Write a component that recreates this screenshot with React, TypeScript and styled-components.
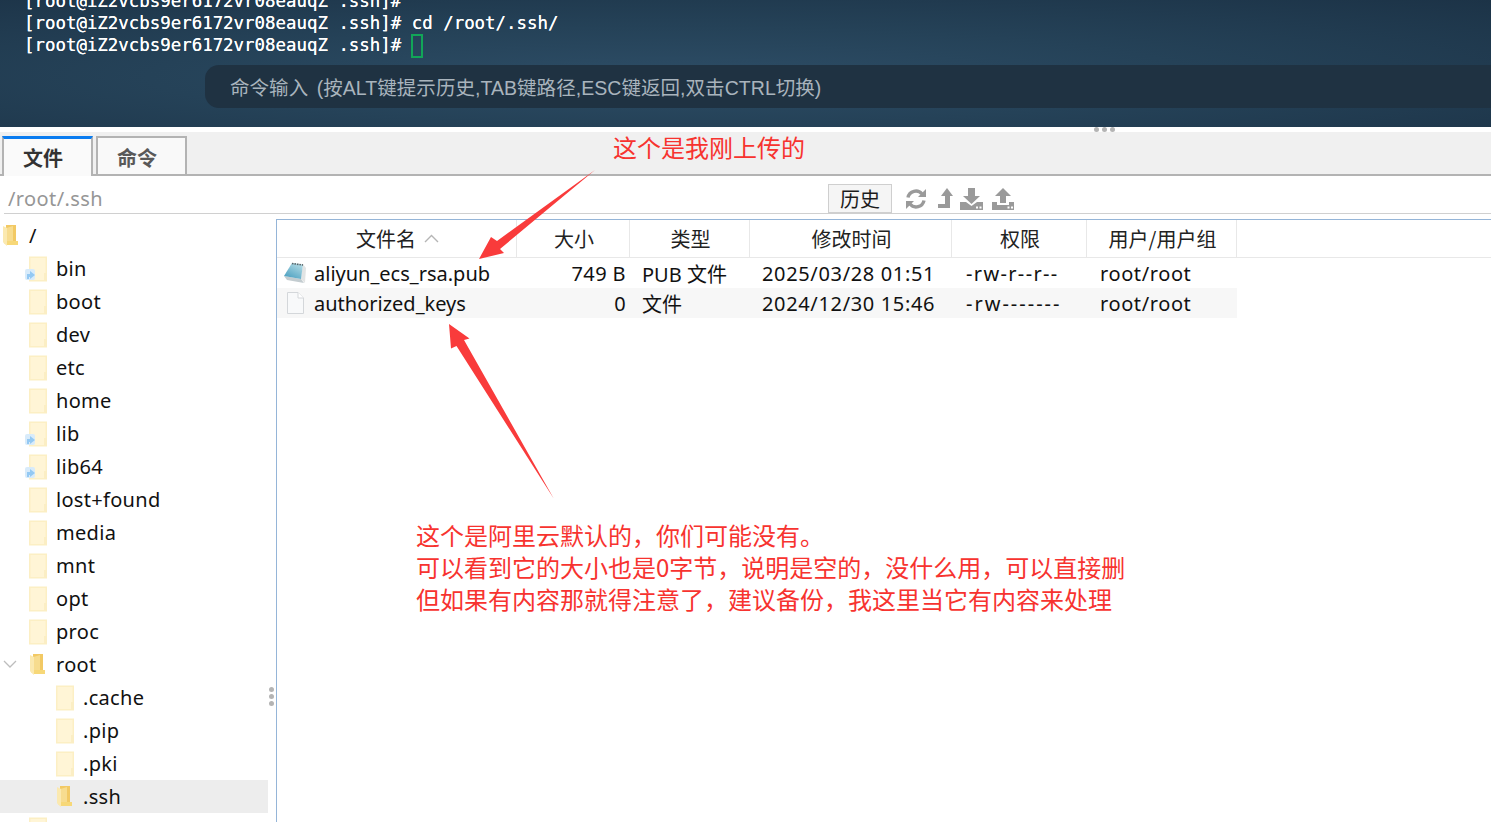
import React from "react";
import styled, { createGlobalStyle } from "styled-components";

const cjk = `"Noto Sans", "Noto Sans CJK SC", sans-serif`;

const GlobalStyle = createGlobalStyle`
  html, body {
    margin: 0;
    padding: 0;
    background: #fff;
    overflow: hidden;
  }
  body {
    font-family: ${cjk};
  }
`;

const Page = styled.div`
  position: relative;
  width: 1491px;
  height: 822px;
  overflow: hidden;
  display: flex;
  flex-direction: column;
`;

const Terminal = styled.div`
  height: 127px;
  flex: none;
  box-sizing: border-box;
  padding-left: 24px;
  background: radial-gradient(ellipse at 45% 60%, #2d4d66 0%, #254258 45%, #1c3347 100%);
  overflow: hidden;
`;

const TermLines = styled.div`
  margin-top: -10px;
  font-family: "DejaVu Sans Mono", monospace;
  font-size: 17.42px;
  line-height: 22px;
  color: #fff;
  white-space: pre;
  text-shadow: 0 0 0.6px #fff;
`;

const Cursor = styled.span`
  display: inline-block;
  width: 12px;
  height: 24px;
  margin-left: -1px;
  box-sizing: border-box;
  border: 2px solid #12a558;
  vertical-align: -7px;
`;

const CommandBar = styled.div`
  margin: 7px 0 0 181px;
  height: 43px;
  display: flex;
  align-items: center;
  padding-left: 25px;
  border-radius: 14px 0 0 14px;
  background: #1f3242;
  color: #a9b4bd;
  font-family: "Liberation Sans", "Noto Sans CJK SC", sans-serif;
  font-size: 19.5px;
  letter-spacing: 0.05px;
  word-spacing: 3px;
  white-space: nowrap;
`;

const Gap = styled.div`
  height: 5px;
  flex: none;
  background: #fff;
  position: relative;
`;

const Grip = styled.div`
  position: absolute;
  display: flex;
  gap: 3px;
  left: 1094px;
  top: 0;
  & > i {
    display: block;
    width: 5px;
    height: 5px;
    border-radius: 50%;
    background: #b4b4b4;
  }
`;

const TabBar = styled.div`
  height: 44px;
  flex: none;
  box-sizing: border-box;
  display: flex;
  align-items: flex-end;
  gap: 3px;
  padding-left: 2px;
  background: #f0f0f0;
  border-bottom: 2px solid #b3b3b3;
`;

const Tab = styled.div<{ $active?: boolean }>`
  box-sizing: border-box;
  width: 91px;
  height: 40px;
  margin-bottom: -2px;
  padding: ${(p) => (p.$active ? "0" : "3px")} 9px 0 0;
  display: flex;
  align-items: center;
  justify-content: center;
  font-family: "Noto Sans CJK SC", sans-serif;
  font-size: 20px;
  font-weight: 700;
  color: ${(p) => (p.$active ? "#333" : "#595959")};
  background: ${(p) => (p.$active ? "#fafafa" : "#f9f9f9")};
  border: 2px solid #b3b3b3;
  border-top: ${(p) => (p.$active ? "3px solid #0a7cf0" : "2px solid #b3b3b3")};
  border-bottom: ${(p) => (p.$active ? "none" : "2px solid #b3b3b3")};
`;

const PathRow = styled.div`
  height: 38px;
  flex: none;
  box-sizing: border-box;
  margin-left: 4px;
  padding-left: 4px;
  display: flex;
  align-items: flex-end;
  border-bottom: 1px solid #d0d0d0;
`;

const PathText = styled.div`
  font-size: 20px;
  line-height: 28px;
  color: #969696;
  letter-spacing: 0.4px;
  width: 820px;
`;

const HistoryButton = styled.div`
  box-sizing: border-box;
  width: 64px;
  height: 30px;
  margin-bottom: -1px;
  display: flex;
  align-items: center;
  justify-content: center;
  background: #f5f5f5;
  border: 1px solid #cfcfcf;
  border-bottom: 2px solid #cfcfcf;
  font-family: "Noto Sans CJK SC", sans-serif;
  font-size: 20px;
  color: #1c1c1c;
`;

const Tools = styled.div`
  display: flex;
  align-items: flex-start;
  margin-left: 13px;
  height: 25px;
  color: #9a9a9a;
`;

const ToolIcon = styled.svg<{ $ml?: number }>`
  display: block;
  margin-left: ${(p) => p.$ml ?? 0}px;
`;

const Body = styled.div`
  flex: 1;
  display: flex;
  min-height: 0;
`;

const Tree = styled.div`
  width: 276px;
  flex: none;
  box-sizing: border-box;
  padding: 5px 8px 0 0;
  position: relative;
  overflow: hidden;
`;

const TreeRow = styled.div<{ $depth: number; $selected?: boolean }>`
  height: 33px;
  display: flex;
  align-items: center;
  padding-left: ${(p) => 2 + p.$depth * 27}px;
  background: ${(p) => (p.$selected ? "#ededed" : "transparent")};
  font-size: 20px;
  letter-spacing: 0.3px;
  color: #111;
  position: relative;
  white-space: nowrap;
`;

const TreeIcon = styled.div<{ $inset?: boolean }>`
  width: 27px;
  height: 26px;
  flex: none;
  box-sizing: border-box;
  padding-left: ${(p) => (p.$inset ? 1 : 0)}px;
  display: flex;
  align-items: center;
  position: relative;
`;

const LinkBadge = styled.svg`
  position: absolute;
  left: -4px;
  top: 12px;
`;

const Chevron = styled.svg`
  position: absolute;
  left: 3px;
  top: 12px;
`;

const ResizeGrip = styled.div`
  position: absolute;
  right: 2px;
  top: 473px;
  display: flex;
  flex-direction: column;
  gap: 2px;
  & > i {
    display: block;
    width: 5px;
    height: 5px;
    border-radius: 50%;
    background: #b4b4b4;
  }
`;

const FilePanel = styled.div`
  flex: 1;
  box-sizing: border-box;
  margin-top: 5px;
  border-left: 1px solid #95b5d8;
  border-top: 1px solid #95b5d8;
`;

const HeaderRow = styled.div`
  display: flex;
  height: 37px;
  border-bottom: 1px solid #e8e8e8;
`;

const HeaderCell = styled.div<{ $w: number }>`
  width: ${(p) => p.$w}px;
  flex: none;
  box-sizing: border-box;
  padding-left: 2px;
  display: flex;
  align-items: center;
  justify-content: center;
  gap: 8px;
  border-right: 1px solid #e8e8e8;
  font-family: "Noto Sans CJK SC", sans-serif;
  font-size: 20px;
  color: #222;
`;

const FileRow = styled.div<{ $alt?: boolean }>`
  display: flex;
  width: 960px;
  height: 30px;
  align-items: center;
  background: ${(p) => (p.$alt ? "#f7f7f7" : "#fff")};
  font-size: 20px;
  color: #111;
  white-space: nowrap;
`;

const NameCell = styled.div`
  width: 240px;
  flex: none;
  display: flex;
  align-items: center;
  padding-left: 6px;
  box-sizing: border-box;
  gap: 7px;
`;

const FileIcon = styled.div`
  width: 24px;
  flex: none;
  display: flex;
  justify-content: center;
`;

const SizeCell = styled.div`
  width: 109px;
  flex: none;
  text-align: right;
  letter-spacing: 0.4px;
`;

const TypeCell = styled.div`
  width: 136px;
  flex: none;
  padding-left: 16px;
  box-sizing: border-box;
`;

const TimeCell = styled.div`
  width: 204px;
  flex: none;
  letter-spacing: 0.65px;
`;

const PermCell = styled.div<{ $spacing: number }>`
  width: 134px;
  flex: none;
  letter-spacing: ${(p) => p.$spacing}px;
`;

const OwnerCell = styled.div`
  letter-spacing: 0.6px;
`;

const Note = styled.div<{ $x: number; $y: number }>`
  position: absolute;
  left: ${(p) => p.$x}px;
  top: ${(p) => p.$y}px;
  color: #f7332f;
  font-family: "Noto Sans CJK SC", sans-serif;
  font-size: 24px;
  line-height: 32px;
  white-space: nowrap;
`;

const Arrows = styled.svg`
  position: absolute;
  left: 0;
  top: 0;
  pointer-events: none;
`;

const FolderPale = () => (
  <svg width="18" height="26" viewBox="0 0 18 26">
    <rect x="0" y="0.5" width="18" height="25" fill="#fcefc4" />
    <rect x="1.5" y="2" width="15" height="22" fill="#fff5d6" />
    <rect x="15" y="17" width="3" height="8" fill="#fbeec4" />
  </svg>
);

const FolderOpen = () => (
  <svg width="15" height="21" viewBox="0 0 15 21">
    <path d="M3 0h10v16h2v4H3z" fill="#f2c964" />
    <path d="M3.500 3L10 1v16H3.500z" fill="#f7dc8f" />
    <path d="M0 1l4 2v18l-3-2.500L0 17z" fill="#fbe9b0" />
    <path d="M4 16h11v4H4z" fill="#f7d878" />
  </svg>
);

const PubIcon = () => (
  <svg width="24" height="22" viewBox="0 0 24 22">
    <defs>
      <linearGradient id="pubPage" x1="0.8" y1="0" x2="0.2" y2="1">
        <stop offset="0" stopColor="#b4dce6" />
        <stop offset="1" stopColor="#4a9fc0" />
      </linearGradient>
    </defs>
    <path d="M20 2l3 4-1 15-4-4z" fill="#e2e4e4" />
    <path d="M1 14l17 3 3 4-17-3z" fill="#c3ccd0" />
    <path d="M9 1l11 1.500L18 17 1 14z" fill="url(#pubPage)" />
    <path d="M9 1.500l11 1.500" fill="none" stroke="#5b6468" strokeWidth="1.6" strokeDasharray="1.500 1" />
  </svg>
);

const BlankIcon = () => (
  <svg width="17" height="22" viewBox="0 0 17 22">
    <path d="M0.500 0.500H11L16.500 6V21.500H0.500Z" fill="#f8f9fa" stroke="#d4d7da" />
    <path d="M11 0.500V6H16.500" fill="#fff" stroke="#d4d7da" />
  </svg>
);

const treeItems: { name: string; depth: number; kind: "pale" | "link" | "open"; caret?: boolean; selected?: boolean }[] = [
  { name: "/", depth: 0, kind: "open" },
  { name: "bin", depth: 1, kind: "link" },
  { name: "boot", depth: 1, kind: "pale" },
  { name: "dev", depth: 1, kind: "pale" },
  { name: "etc", depth: 1, kind: "pale" },
  { name: "home", depth: 1, kind: "pale" },
  { name: "lib", depth: 1, kind: "link" },
  { name: "lib64", depth: 1, kind: "link" },
  { name: "lost+found", depth: 1, kind: "pale" },
  { name: "media", depth: 1, kind: "pale" },
  { name: "mnt", depth: 1, kind: "pale" },
  { name: "opt", depth: 1, kind: "pale" },
  { name: "proc", depth: 1, kind: "pale" },
  { name: "root", depth: 1, kind: "open", caret: true },
  { name: ".cache", depth: 2, kind: "pale" },
  { name: ".pip", depth: 2, kind: "pale" },
  { name: ".pki", depth: 2, kind: "pale" },
  { name: ".ssh", depth: 2, kind: "open", selected: true },
  { name: "", depth: 1, kind: "pale" },
];

const columns = [
  { label: "文件名", w: 240, sort: true },
  { label: "大小", w: 113 },
  { label: "类型", w: 120 },
  { label: "修改时间", w: 202 },
  { label: "权限", w: 135 },
  { label: "用户/用户组", w: 150 },
];

export default function App() {
  return (
    <Page>
      <GlobalStyle />
      <Terminal>
        <TermLines>
          {"[root@iZ2vcbs9er6172vr08eauqZ .ssh]#\n[root@iZ2vcbs9er6172vr08eauqZ .ssh]# cd /root/.ssh/\n[root@iZ2vcbs9er6172vr08eauqZ .ssh]# "}
          <Cursor />
        </TermLines>
        <CommandBar>命令输入 (按ALT键提示历史,TAB键路径,ESC键返回,双击CTRL切换)</CommandBar>
      </Terminal>
      <Gap>
        <Grip>
          <i />
          <i />
          <i />
        </Grip>
      </Gap>
      <TabBar>
        <Tab $active>文件</Tab>
        <Tab>命令</Tab>
      </TabBar>
      <PathRow>
        <PathText>/root/.ssh</PathText>
        <HistoryButton>历史</HistoryButton>
        <Tools>
          <ToolIcon width="22" height="22" viewBox="0 0 22 22" fill="none" stroke="currentColor" strokeWidth="3.400">
            <path d="M3 9.500A8 8 0 0 1 17 6" />
            <path d="M19 12.500A8 8 0 0 1 5 16" />
            <path d="M21 1v8h-8z" fill="currentColor" stroke="none" />
            <path d="M1 21v-8h8z" fill="currentColor" stroke="none" />
          </ToolIcon>
          <ToolIcon $ml={11} width="15" height="20" viewBox="0 0 15 20" fill="currentColor">
            <path d="M9 0l6 8h-3v12H0v-4h7V8H3z" />
          </ToolIcon>
          <ToolIcon $ml={7} width="23" height="22" viewBox="0 0 23 22" fill="currentColor">
            <path d="M8 0h7v8h5l-8.500 8L3 8h5z" />
            <path d="M0 14h6l5.500 4 5.500-4h6v8H0z" />
            <path d="M16 18.500h2v2h-2zM19.500 18.500h2v2h-2z" fill="#fff" />
          </ToolIcon>
          <ToolIcon $ml={9} width="22" height="22" viewBox="0 0 22 22" fill="currentColor">
            <path d="M11 0l8 8h-5v7H8V8H3z" />
            <path d="M0 14h5v3h12v-3h5v8H0z" />
            <path d="M15.500 18.500h2v2h-2zM19 18.500h2v2h-2z" fill="#fff" />
          </ToolIcon>
        </Tools>
      </PathRow>
      <Body>
        <Tree>
          {treeItems.map((item, i) => (
            <TreeRow key={i} $depth={item.depth} $selected={item.selected}>
              {item.caret && (
                <Chevron width="14" height="9" viewBox="0 0 14 9" fill="none" stroke="#bdbdbd" strokeWidth="1.300">
                  <path d="M1 1l6 6 6-6" />
                </Chevron>
              )}
              <TreeIcon $inset={item.kind === "open"}>
                {item.kind === "open" ? <FolderOpen /> : <FolderPale />}
                {item.kind === "link" && (
                  <LinkBadge width="11" height="12" viewBox="0 0 11 12">
                    <rect x="0" y="1" width="10" height="11" rx="2" fill="#d8ebfa" />
                    <path d="M2 11V6h3V3l5 4-5 4V9H4v2z" fill="#94c9f3" />
                  </LinkBadge>
                )}
              </TreeIcon>
              {item.name}
            </TreeRow>
          ))}
          <ResizeGrip>
            <i />
            <i />
            <i />
          </ResizeGrip>
        </Tree>
        <FilePanel>
          <HeaderRow>
            {columns.map((c) => (
              <HeaderCell key={c.label} $w={c.w}>
                {c.label}
                {c.sort && (
                  <svg width="15" height="9" viewBox="0 0 15 9" fill="none" stroke="#b5b5b5" strokeWidth="1.400">
                    <path d="M1 8l6.500-6.500L14 8" />
                  </svg>
                )}
              </HeaderCell>
            ))}
          </HeaderRow>
          <FileRow>
            <NameCell>
              <FileIcon>
                <PubIcon />
              </FileIcon>
              aliyun_ecs_rsa.pub
            </NameCell>
            <SizeCell>749 B</SizeCell>
            <TypeCell>PUB 文件</TypeCell>
            <TimeCell>2025/03/28 01:51</TimeCell>
            <PermCell $spacing={1.35}>-rw-r--r--</PermCell>
            <OwnerCell>root/root</OwnerCell>
          </FileRow>
          <FileRow $alt>
            <NameCell>
              <FileIcon>
                <BlankIcon />
              </FileIcon>
              authorized_keys
            </NameCell>
            <SizeCell>0</SizeCell>
            <TypeCell>文件</TypeCell>
            <TimeCell>2024/12/30 15:46</TimeCell>
            <PermCell $spacing={2}>-rw-------</PermCell>
            <OwnerCell>root/root</OwnerCell>
          </FileRow>
        </FilePanel>
      </Body>
      <Note $x={613} $y={131}>这个是我刚上传的</Note>
      <Note $x={416} $y={519}>
        这个是阿里云默认的，你们可能没有。
        <br />
        可以看到它的大小也是0字节，说明是空的，没什么用，可以直接删
        <br />
        但如果有内容那就得注意了，建议备份，我这里当它有内容来处理
      </Note>
      <Arrows width="1491" height="822" viewBox="0 0 1491 822">
        <path d="M595 170L497 241L491 237L479 259L504 253L500 249Z" fill="#f93b3b" />
        <path d="M554 499L464 340L469.500 338.500L449 324L451 348.500L456.500 346Z" fill="#f93b3b" />
      </Arrows>
    </Page>
  );
}
